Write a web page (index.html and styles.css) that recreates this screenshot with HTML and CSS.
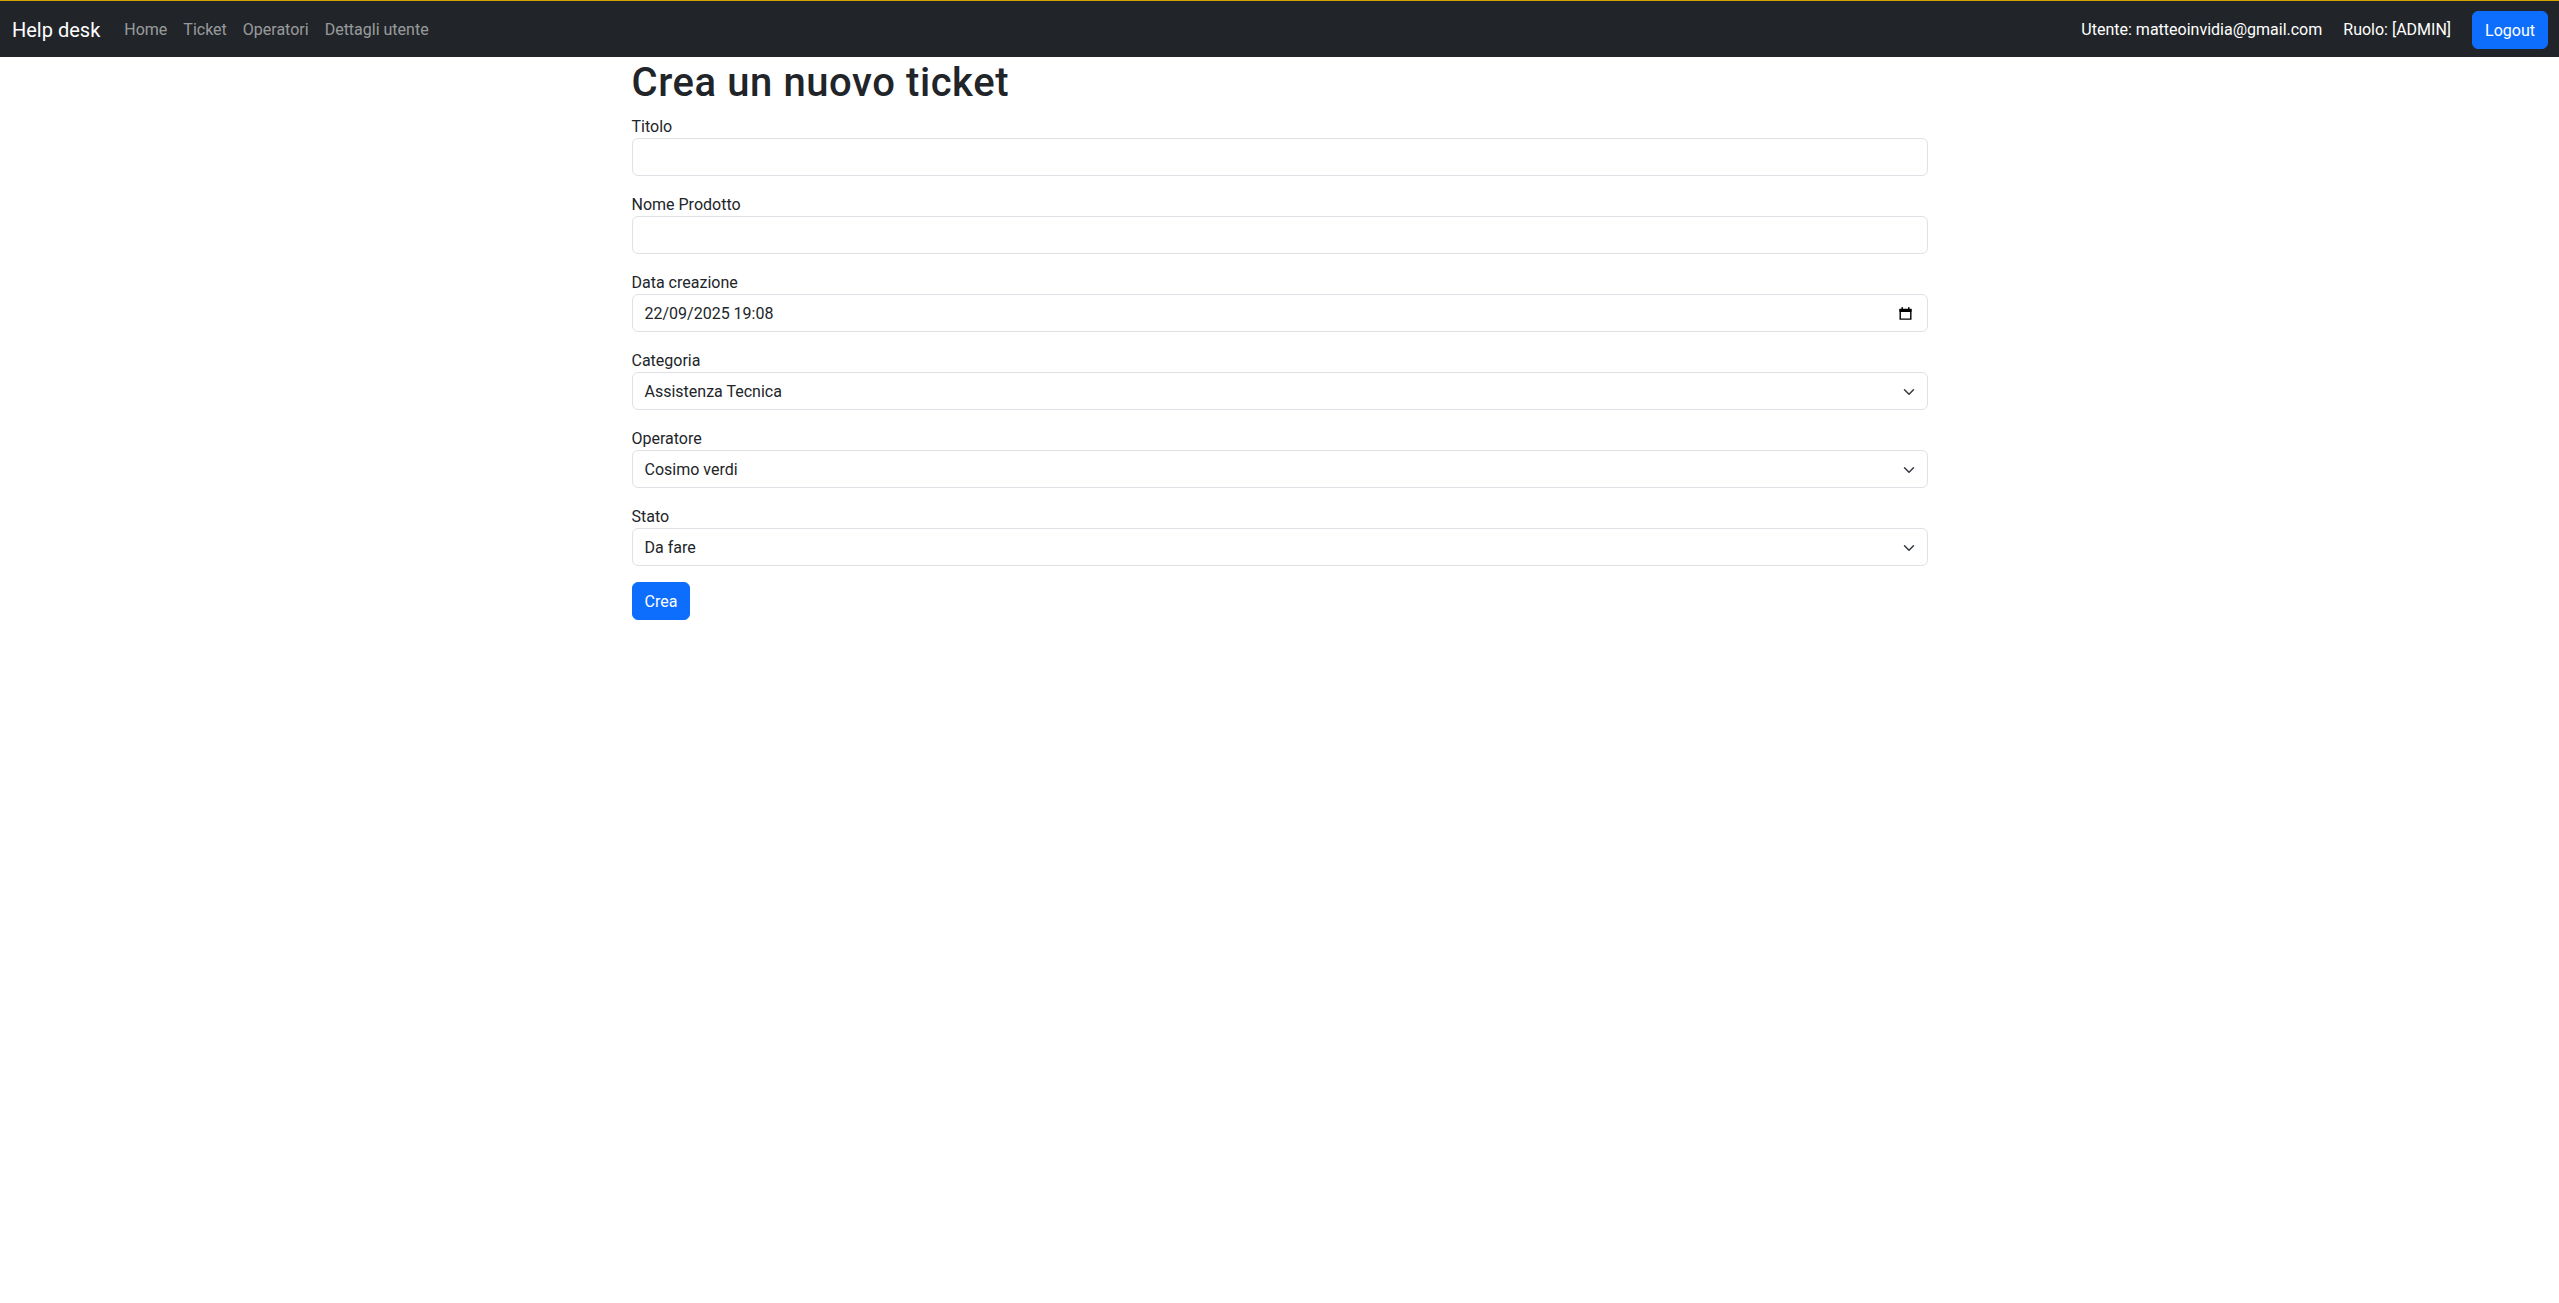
FILE: index.html
```html
<!DOCTYPE html>
<html lang="it">
<head>
<meta charset="utf-8">
<title>Help desk</title>
<link rel="stylesheet" href="styles.css">
</head>
<body>
<nav class="navbar">
  <div class="nav-left">
    <span class="brand">Help desk</span>
    <ul class="nav-links">
      <li>Home</li>
      <li>Ticket</li>
      <li>Operatori</li>
      <li>Dettagli utente</li>
    </ul>
  </div>
  <div class="nav-right">
    <span class="nav-text">Utente: matteoinvidia@gmail.com</span>
    <span class="nav-text">Ruolo: [ADMIN]</span>
    <button class="btn btn-primary" type="button">Logout</button>
  </div>
</nav>
<main class="container">
  <h1 class="title">Crea un nuovo ticket</h1>
  <form class="ticket-form">
    <div class="field">
      <label class="label">Titolo</label>
      <div class="control"></div>
    </div>
    <div class="field">
      <label class="label">Nome Prodotto</label>
      <div class="control"></div>
    </div>
    <div class="field">
      <label class="label">Data creazione</label>
      <div class="control control-date">
        <span>22/09/2025 19:08</span>
        <svg class="cal-icon" width="13" height="13" viewBox="0 0 13 13"><path d="M1.2 2.5h10.6v9.6H1.2z" fill="none" stroke="#000" stroke-width="1.4"/><path d="M0.5 2h12v3H0.5z" fill="#000"/><path d="M3.2 0v2.5M9.8 0v2.5" stroke="#000" stroke-width="1.3"/></svg>
      </div>
    </div>
    <div class="field">
      <label class="label">Categoria</label>
      <div class="control control-select"><span>Assistenza Tecnica</span><svg class="chev" width="12" height="12" viewBox="0 0 16 16"><path d="m2 5 6 6 6-6" fill="none" stroke="#343a40" stroke-linecap="round" stroke-linejoin="round" stroke-width="2"/></svg></div>
    </div>
    <div class="field">
      <label class="label">Operatore</label>
      <div class="control control-select"><span>Cosimo verdi</span><svg class="chev" width="12" height="12" viewBox="0 0 16 16"><path d="m2 5 6 6 6-6" fill="none" stroke="#343a40" stroke-linecap="round" stroke-linejoin="round" stroke-width="2"/></svg></div>
    </div>
    <div class="field">
      <label class="label">Stato</label>
      <div class="control control-select"><span>Da fare</span><svg class="chev" width="12" height="12" viewBox="0 0 16 16"><path d="m2 5 6 6 6-6" fill="none" stroke="#343a40" stroke-linecap="round" stroke-linejoin="round" stroke-width="2"/></svg></div>
    </div>
    <div class="actions">
      <button class="btn btn-primary" type="button">Crea</button>
    </div>
  </form>
</main>
</body>
</html>
```
FILE: styles.css
```css
* { box-sizing: border-box; }
html, body { margin: 0; padding: 0; }
body {
  font-family: Roboto, "Open Sans", "Liberation Sans", sans-serif;
  font-size: 16px;
  line-height: 1.5;
  color: #212529;
  background: #fff;
}
.navbar {
  height: 57px;
  background: #212529;
  border-top: 1px solid #d4a500;
  display: flex;
  align-items: center;
  justify-content: space-between;
  padding: 1px 11px 0 12px;
}
.nav-left { display: flex; align-items: center; }
.brand {
  color: #fff;
  font-size: 20px;
  line-height: 30px;
  margin-right: 16px;
}
.nav-links {
  list-style: none;
  margin: 0;
  padding: 0;
  display: flex;
}
.nav-links li { color: rgba(255,255,255,.55); font-size: 16px; padding: 0 8px; }
.nav-right { display: flex; align-items: center; }
.nav-text { color: #fff; margin-right: 21px; }
.btn {
  font-family: inherit;
  font-size: 16px;
  line-height: 24px;
  border: 1px solid transparent;
  border-radius: 6px;
  padding: 7px 12px 5px;
  height: 38px;
}
.btn-primary { background: #0d6efd; border-color: #0d6efd; color: #fff; }
.container {
  width: 1320px;
  margin: 0 auto;
  padding: 0 12px;
}
.title {
  margin: 0 0 7px 0;
  padding-top: 2px;
  font-size: 40px;
  font-weight: 500;
  line-height: 48px;
  letter-spacing: 0.58px;
}
.field { margin-bottom: 16px; }
.label { display: block; line-height: 22px; padding-top: 2px; }
.control {
  height: 38px;
  border: 1px solid #dee2e6;
  border-radius: 6px;
  padding: 1px 12px 0;
  display: flex;
  align-items: center;
  justify-content: space-between;
}
.control-date .cal-icon { margin-right: 3px; }
.actions { display: flex; }
```
